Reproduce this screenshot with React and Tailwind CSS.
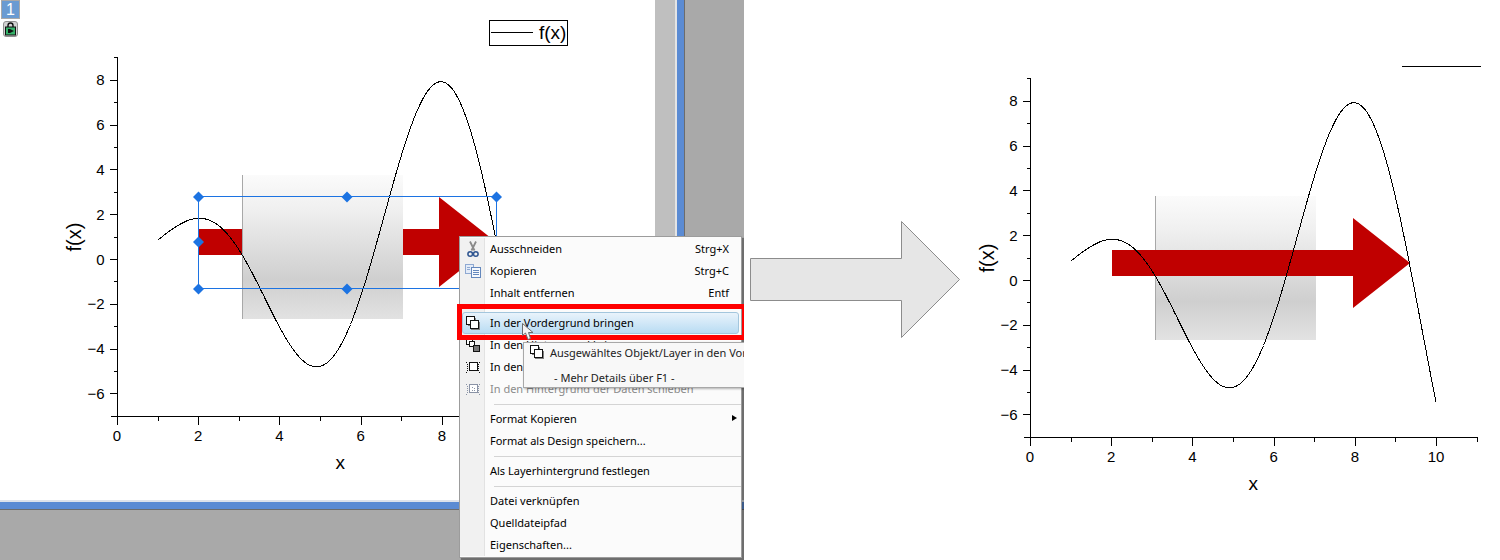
import React from "react";

const SANS = "font-['Liberation_Sans',Arial,sans-serif]";

// f(x) = x sin x, sampled for the plot line
const curve = [];
for (let i = 0; i <= 180; i++) {
  const x = 1 + i * 0.05;
  curve.push([x, x * Math.sin(x)]);
}

function Plot({ ox, oy, width, height, showTail, children, over }) {
  // ox, oy = pixel position of the (0,0) data point inside this svg
  const px = (x) => ox + x * 40.6;
  const py = (y) => oy - y * 22.4;
  const points = curve.map(([x, y]) => `${px(x).toFixed(1)},${py(y).toFixed(1)}`).join(" ");
  const yTicks = [9, 8, 7, 6, 5, 4, 3, 2, 1, 0, -1, -2, -3, -4, -5, -6, -7];
  const xTicks = [0, 1, 2, 3, 4, 5, 6, 7, 8, 9, 10, 11];
  const axisX = Math.round(px(0)) + 0.5;
  const axisY = Math.round(py(-7)) + 0.5;
  return (
    <svg width={width} height={height} className={`block ${SANS}`}>
      {children}
      <polyline points={points} fill="none" stroke="#000" strokeWidth="1" shapeRendering="crispEdges" />
      {over}
      <g stroke="#000" strokeWidth="1" shapeRendering="crispEdges">
        <line x1={axisX} y1={Math.round(py(9))} x2={axisX} y2={axisY} />
        <line x1={axisX - 7} y1={axisY} x2={Math.round(px(11)) + 1} y2={axisY} />
        {yTicks.map((t) => (
          <line key={t} x1={axisX - (t % 2 === 0 ? 8 : 4)} x2={axisX} y1={Math.round(py(t)) + 0.5} y2={Math.round(py(t)) + 0.5} />
        ))}
        {xTicks.map((t) => (
          <line key={t} x1={Math.round(px(t)) + 0.5} x2={Math.round(px(t)) + 0.5} y1={axisY} y2={axisY + (t % 2 === 0 ? 8 : 4)} />
        ))}
      </g>
      {[8, 6, 4, 2, 0, -2, -4, -6].map((t) => (
        <text key={t} x={axisX - 13} y={py(t) + 5.5} textAnchor="end" className="text-[15px]" fill="#000">
          {t < 0 ? `\u2212${-t}` : t}
        </text>
      ))}
      {[0, 2, 4, 6, 8, 10].map((t) =>
        t === 10 && !showTail ? null : (
          <text key={t} x={px(t)} y={axisY + 24} textAnchor="middle" className="text-[15px]" fill="#000">
            {t}
          </text>
        )
      )}
      <text x={px(5.5)} y={axisY + 52} textAnchor="middle" className="text-[19px]" fill="#000">x</text>
      <text
        x={axisX - 37}
        y={oy - 22}
        textAnchor="middle"
        transform={`rotate(-90 ${axisX - 37} ${oy - 22})`}
        className="text-[20px]"
        fill="#000"
      >
        f(x)
      </text>
    </svg>
  );
}

function GrayBox({ id, x, y }) {
  return (
    <g>
      <defs>
        <linearGradient id={id} x1="0" y1="0" x2="0" y2="1">
          <stop offset="0" stopColor="#fbfbfb" />
          <stop offset="0.25" stopColor="#efefef" />
          <stop offset="0.5" stopColor="#dedede" />
          <stop offset="0.73" stopColor="#cfcfcf" />
          <stop offset="1" stopColor="#e2e2e2" />
        </linearGradient>
      </defs>
      <rect x={x} y={y} width="161" height="144" fill={`url(#${id})`} />
      <rect x={x} y={y} width="1" height="144" fill="#a8a8a8" />
    </g>
  );
}

function RedArrow({ x, y }) {
  // x,y = left end of the shaft, centre line
  return (
    <polygon
      points={`${x},${y - 13} ${x + 241},${y - 13} ${x + 241},${y - 45} ${x + 298},${y} ${x + 241},${y + 45} ${x + 241},${y + 13} ${x},${y + 13}`}
      fill="#c00000"
    />
  );
}

function Handle({ x, y }) {
  return <polygon points={`${x},${y - 5.5} ${x + 5.5},${y} ${x},${y + 5.5} ${x - 5.5},${y}`} fill="#1c73e2" />;
}

function Selection() {
  return (
    <g>
      <rect x="198.5" y="196.5" width="298" height="92" fill="none" stroke="#1c73e2" strokeWidth="1" shapeRendering="crispEdges" />
      <Handle x={198.5} y={197} />
      <Handle x={347} y={197} />
      <Handle x={496.5} y={197} />
      <Handle x={198.5} y={242} />
      <Handle x={198.5} y={289} />
      <Handle x={347} y={289} />
    </g>
  );
}

function Legend() {
  return (
    <g>
      <rect x="489.5" y="20.5" width="78" height="25" fill="#fff" stroke="#000" shapeRendering="crispEdges" />
      <line x1="491" x2="533" y1="32.5" y2="32.5" stroke="#000" shapeRendering="crispEdges" />
      <text x="539" y="39" className="text-[19px]" fill="#000">f(x)</text>
    </g>
  );
}

function ScissorsIcon() {
  return (
    <svg width="12" height="17" viewBox="0 0 12 17">
      <path d="M3 0.5 L7.5 9.5 M9 0.5 L4.5 9.5" stroke="#8a8a8a" strokeWidth="1.8" fill="none" />
      <circle cx="3.2" cy="13" r="2.3" fill="none" stroke="#2f5590" strokeWidth="1.5" />
      <circle cx="8.8" cy="13" r="2.3" fill="none" stroke="#2f5590" strokeWidth="1.5" />
    </svg>
  );
}

function CopyIcon() {
  return (
    <svg width="16" height="14" viewBox="0 0 16 14" shapeRendering="crispEdges">
      <rect x="0.5" y="0.5" width="8" height="9" fill="#e4ecf8" stroke="#8fa9d2" />
      <rect x="6.5" y="3.5" width="9" height="10" fill="#f6f9fd" stroke="#6488bd" />
      <path d="M8 6.5h6M8 8.5h6M8 10.5h6" stroke="#6488bd" />
      <path d="M2 3.5h3M2 5.5h3" stroke="#8fa9d2" />
    </svg>
  );
}

function LayerFrontIcon() {
  return (
    <svg className="shrink-0" width="16" height="16" viewBox="0 0 16 16" shapeRendering="crispEdges">
      <rect x="1.5" y="1.5" width="8" height="8" fill="#fff" stroke="#111" />
      <rect x="5.5" y="5.5" width="8" height="8" fill="#fff" stroke="#111" />
      <path d="M6 14.5h9M14.5 7v8M3 10.5h2M10.5 3v2" stroke="#808080" />
    </svg>
  );
}

function LayerBackIcon() {
  return (
    <svg width="16" height="16" viewBox="0 0 16 16" shapeRendering="crispEdges">
      <rect x="1.5" y="1.5" width="6" height="6" fill="#fff" stroke="#111" />
      <rect x="4.5" y="4.5" width="5" height="5" fill="#fff" stroke="#111" />
      <rect x="8.5" y="8.5" width="6" height="6" fill="#777" stroke="#111" />
    </svg>
  );
}

function DottedIcon({ faded }) {
  const c = faded ? "#8a93a6" : "#111";
  return (
    <svg width="16" height="14" viewBox="0 0 16 14" shapeRendering="crispEdges">
      <path d="M1 2h1M2 4h1M2 6h1M2 8h1M2 10h1M1 12h1M14 2h1M13 4h1M13 6h1M13 8h1M13 10h1M14 12h1" stroke={c} />
      <rect x="4.5" y="2.5" width="8" height="8" fill="#fff" stroke={c} />
      {faded && <path d="M7 5h1M9 6h1M7 8h1M9 8h1" stroke={c} />}
    </svg>
  );
}

function MenuRow({ label, shortcut, icon, sub, disabled, active }) {
  return (
    <div className="relative flex h-[22px] items-stretch">
      <div className="flex w-[25px] shrink-0 items-center justify-center border-r border-[#e2e2e2] bg-[#f1f1f1]" />
      {active && (
        <div className="absolute inset-y-0 left-[2px] right-[2px] rounded-[3px] border border-[#a3c6dd] bg-gradient-to-b from-[#e9f3fb] to-[#b9dcf3]" />
      )}
      <span className="absolute left-0 top-0 flex h-full w-[25px] items-center justify-center">{icon}</span>
      <div className={`relative flex flex-1 items-center justify-between pb-[2px] pl-[5px] ${sub ? "pr-[4px]" : "pr-[12px]"} ${disabled ? "text-[#8b8b8b]" : "text-black"}`}>
        <span>{label}</span>
        {shortcut && <span>{shortcut}</span>}
        {sub && <span className="h-0 w-0 border-y-[3.5px] border-l-[5px] border-y-transparent border-l-black" />}
      </div>
    </div>
  );
}

function MenuSeparator() {
  return (
    <div className="flex h-[8px] items-stretch">
      <div className="w-[25px] shrink-0 border-r border-[#e2e2e2] bg-[#f1f1f1]" />
      <div className="flex flex-1 items-center pl-[9px]">
        <div className="h-px w-full bg-[#d4d4d4]" />
      </div>
    </div>
  );
}

function ContextMenu() {
  return (
    <div className="absolute left-[459px] top-[236px] w-[283px] border border-[#9c9c9c] bg-[#fbfbfb] py-px font-['Noto_Sans',sans-serif] text-[11px] leading-none shadow-[2px_2px_1px_rgba(0,0,0,0.35)]">
      <MenuRow label="Ausschneiden" shortcut="Strg+X" icon={<ScissorsIcon />} />
      <MenuRow label="Kopieren" shortcut="Strg+C" icon={<CopyIcon />} />
      <MenuRow label="Inhalt entfernen" shortcut="Entf" />
      <MenuSeparator />
      <MenuRow label="In der Vordergrund bringen" icon={<LayerFrontIcon />} active />
      <MenuRow label="In den Hintergrund bringen" icon={<LayerBackIcon />} />
      <MenuRow label="In den Vordergrund der Daten schieben" icon={<DottedIcon />} />
      <MenuRow label="In den Hintergrund der Daten schieben" icon={<DottedIcon faded />} disabled />
      <MenuSeparator />
      <MenuRow label="Format Kopieren" sub />
      <MenuRow label="Format als Design speichern..." />
      <MenuSeparator />
      <MenuRow label="Als Layerhintergrund festlegen" />
      <MenuSeparator />
      <MenuRow label="Datei verknüpfen" />
      <MenuRow label="Quelldateipfad" />
      <MenuRow label="Eigenschaften..." />
    </div>
  );
}

function Tooltip() {
  return (
    <div className="absolute left-[523px] top-[342px] h-[46px] w-[240px] overflow-hidden border border-[#a8a8a8] bg-[#f8f8f8] font-['Noto_Sans',sans-serif] text-[11px] leading-none text-[#222] shadow-[1px_1px_2px_rgba(0,0,0,0.3)]">
      <div className="flex items-center gap-[5px] whitespace-nowrap pl-[5px] pt-px">
        <LayerFrontIcon />
        <span>Ausgewähltes Objekt/Layer in den Vordergrund bringen</span>
      </div>
      <div className="whitespace-nowrap pl-[30px] pt-[12px]">- Mehr Details über F1 -</div>
    </div>
  );
}

function Cursor() {
  return (
    <svg className="absolute left-[522px] top-[323px]" width="13" height="18" viewBox="0 0 13 18">
      <path d="M0.5 0.5 L0.5 12.5 L3.5 10 L6 16.5 L8.5 15.5 L6.5 9.5 L11 9.5 Z" fill="#f4f4f4" stroke="#6c6c6c" strokeWidth="1" />
    </svg>
  );
}

function WindowPanel() {
  return (
    <div className="relative flex h-full w-[744px] shrink-0 flex-col overflow-hidden">
      <div className="flex h-[500px] shrink-0">
        <div className="relative w-[655px] shrink-0 bg-white">
          <Plot ox={117} oy={259} width={655} height={500} over={<Selection />}>
            <RedArrow x={198} y={242} />
            <GrayBox id="boxLeft" x={242} y={175} />
            <Legend />
          </Plot>
          <div className={`absolute left-px top-0 flex h-[19px] w-[19px] items-center justify-center border border-[#a9a9a9] bg-[#6a9bd2] text-[16px] leading-none text-white ${SANS}`}>
            1
          </div>
          <svg className="absolute left-[3px] top-[21px]" width="15" height="16" viewBox="0 0 15 16">
            <rect x="0.5" y="0.5" width="14" height="15" rx="2.5" fill="#d2d2d2" stroke="#8f8f8f" />
            <path d="M5 6V4.5a2.5 2.5 0 0 1 5 0V6" fill="none" stroke="#111" strokeWidth="1.4" />
            <rect x="2.5" y="6" width="10" height="8" fill="#36b36a" stroke="#111" />
            <path d="M5 8h2l4 2-4 2H5z" fill="#111" />
          </svg>
        </div>
        <div className="w-[20px] bg-[#bfbfbf]" />
        <div className="w-[2px] bg-[#e4e4e4]" />
        <div className="w-[7px] bg-[#5b8bd3]" />
        <div className="w-px bg-[#6c6c6c]" />
        <div className="flex-1 bg-[#a9a9a9]" />
      </div>
      <div className="h-[2px] shrink-0 bg-[#dfe3ea]" />
      <div className="h-[7px] shrink-0 bg-[#5b8bd3]" />
      <div className="h-px shrink-0 bg-[#6c6c6c]" />
      <div className="flex-1 bg-[#a9a9a9]" />
      <ContextMenu />
      <Tooltip />
      <div className="absolute left-[457px] top-[304px] h-[36px] w-[290px] border-[5px] border-[#ff0000]" />
      <Cursor />
    </div>
  );
}

export default function App() {
  return (
    <div className="flex h-[560px] w-[1500px] overflow-hidden bg-white">
      <WindowPanel />
      <div className="flex w-[216px] shrink-0 items-center pl-[6px]">
        <svg width="210" height="118" viewBox="0 0 210 118">
          <polygon points="0.5,37.5 151.5,37.5 151.5,0.5 209.5,58.5 151.5,116.5 151.5,79.5 0.5,79.5" fill="#e6e6e6" stroke="#8c8c8c" />
        </svg>
      </div>
      <div className="flex-1">
        <Plot ox={70} oy={280} width={540} height={560} showTail over={null}>
          <GrayBox id="boxRight" x={195} y={196} />
          <RedArrow x={152} y={263} />
          <line x1="442" x2="521" y1="66.5" y2="66.5" stroke="#000" shapeRendering="crispEdges" />
        </Plot>
      </div>
    </div>
  );
}
